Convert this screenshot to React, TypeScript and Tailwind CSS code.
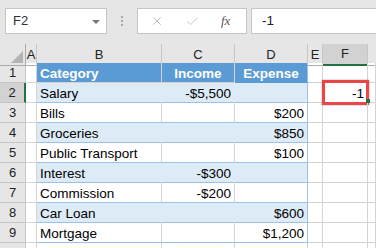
import { X, Check } from "lucide-react";

type Row = {
  n: number;
  cat: string;
  income: string;
  expense: string;
};

const rows: Row[] = [
  { n: 2, cat: "Salary", income: "-$5,500", expense: "" },
  { n: 3, cat: "Bills", income: "", expense: "$200" },
  { n: 4, cat: "Groceries", income: "", expense: "$850" },
  { n: 5, cat: "Public Transport", income: "", expense: "$100" },
  { n: 6, cat: "Interest", income: "-$300", expense: "" },
  { n: 7, cat: "Commission", income: "-$200", expense: "" },
  { n: 8, cat: "Car Loan", income: "", expense: "$600" },
  { n: 9, cat: "Mortgage", income: "", expense: "$1,200" },
];

const gridCols = "grid grid-cols-[26px_11px_125px_73px_73px_15px_45px_1fr]";
const cell = "h-[20px] border-r border-b border-[#d4d4d4] pt-[2px] leading-[18px] whitespace-nowrap overflow-visible";

const Toolbar = () => (
  <div className="h-[44px] bg-[#e6e6e6] flex items-start pt-[8px] pl-[5px]">
    <div className="w-[102px] h-[26px] bg-white border border-[#c6c6c6] flex items-center justify-between pl-[7px] pr-[6px] text-[13px] text-[#333]">
      <span>F2</span>
      <span className="w-0 h-0 border-l-[4px] border-r-[4px] border-t-[4px] border-l-transparent border-r-transparent border-t-[#777] mt-[1px]" />
    </div>
    <div className="w-[30px] h-[26px] flex flex-col items-center justify-center gap-[2px]">
      <span className="w-[2px] h-[2px] bg-[#a8a8a8]" />
      <span className="w-[2px] h-[2px] bg-[#a8a8a8]" />
      <span className="w-[2px] h-[2px] bg-[#a8a8a8]" />
    </div>
    <div className="w-[110px] h-[26px] bg-white border border-[#c6c6c6] flex items-center">
      <X className="ml-[12px] w-[14px] h-[14px] text-[#b4b4b4]" strokeWidth={1.5} />
      <Check className="ml-[21px] w-[15px] h-[15px] text-[#c4c4c4]" strokeWidth={1.5} />
      <span className="ml-[21px] text-[13px] italic text-[#555] font-['Liberation_Serif',serif]">fx</span>
    </div>
    <div className="ml-[4px] flex-1 h-[26px] bg-white border border-r-0 border-[#c6c6c6] flex items-center pl-[10px] text-[13.5px] text-[#222]">
      -1
    </div>
  </div>
);

const HeaderRow = () => (
  <div className={`${gridCols} h-[19px] bg-[#e6e6e6] text-[13px] text-[#222]`}>
    <div className="relative border-r border-b border-[#ababab]">
      <svg className="absolute right-[2px] bottom-[2px]" width="12" height="12" viewBox="0 0 12 12">
        <polygon points="12,0 12,12 0,12" fill="#b4b4b4" />
      </svg>
    </div>
    {["A", "B", "C", "D", "E"].map((c) => (
      <div key={c} className="flex items-center justify-center border-r border-b border-[#c6c6c6] border-b-[#ababab]">
        {c}
      </div>
    ))}
    <div className="flex items-center justify-center bg-[#d2d2d2] border-r border-[#c6c6c6] border-b-2 border-b-[#217346]">F</div>
    <div className="border-b border-[#ababab]" />
  </div>
);

const RowHead = ({ n, sel }: { n?: number; sel?: boolean }) => (
  <div
    className={
      sel
        ? "h-[20px] flex items-center justify-center bg-[#d2d2d2] border-b border-[#c6c6c6] border-r-2 border-r-[#217346] text-[13px] text-[#222]"
        : "h-[20px] flex items-center justify-center bg-[#e6e6e6] border-b border-r border-[#c6c6c6] text-[13px] text-[#222]"
    }
  >
    {n}
  </div>
);

const DataRow = ({ row, band }: { row: Row; band: boolean }) => {
  const bg = band ? "bg-[#ddebf7]" : "bg-white";
  const inner = band ? "border-r-[#ddebf7]" : "border-r-[#d4d4d4]";
  return (
    <div className={`${gridCols} text-[13.5px] text-black`}>
      <RowHead n={row.n} sel={row.n === 2} />
      <div className={cell} />
      <div className={`${cell} ${bg} ${inner} border-b-[#9bc2e6] pl-[3px]`}>{row.cat}</div>
      <div className={`${cell} ${bg} ${inner} border-b-[#9bc2e6] text-right pr-[3px]`}>{row.income}</div>
      <div className={`${cell} ${bg} border-r-[#9bc2e6] border-b-[#9bc2e6] text-right pr-[3px]`}>{row.expense}</div>
      <div className={cell} />
      <div className={`${cell} relative text-right pr-[3px]`}>
        {row.n === 2 && (
          <>
            <span>-1</span>
            <span className="absolute -left-[1px] -top-[3px] w-[47px] h-[25px] border-[3px] border-[#eb4646] shadow-[0_0_2px_rgba(0,0,0,0.35)]" />
            <span className="absolute -right-[3px] -bottom-[1px] w-[4px] h-[4px] bg-[#217346]" />
          </>
        )}
      </div>
      <div className={cell} />
    </div>
  );
};

export default function App() {
  return (
    <div className="w-[376px] h-[248px] overflow-hidden bg-white font-['Liberation_Sans',Arial,sans-serif]">
      <Toolbar />
      <HeaderRow />
      <div className={`${gridCols} text-[13.5px]`}>
        <RowHead n={1} />
        <div className={cell} />
        <div className={`${cell} bg-[#5b9bd5] border-[#5b9bd5] text-white font-bold pl-[3px]`}>Category</div>
        <div className={`${cell} bg-[#5b9bd5] border-[#5b9bd5] text-white font-bold text-center`}>Income</div>
        <div className={`${cell} bg-[#5b9bd5] border-b-[#5b9bd5] border-r-[#9bc2e6] text-white font-bold text-center`}>Expense</div>
        <div className={cell} />
        <div className={cell} />
        <div className={cell} />
      </div>
      {rows.map((r, i) => (
        <DataRow key={r.n} row={r} band={i % 2 === 0} />
      ))}
      <div className={gridCols}>
        <RowHead />
        <div className={cell} />
        <div className={cell} />
        <div className={cell} />
        <div className={cell} />
        <div className={cell} />
        <div className={cell} />
        <div className={cell} />
      </div>
    </div>
  );
}
